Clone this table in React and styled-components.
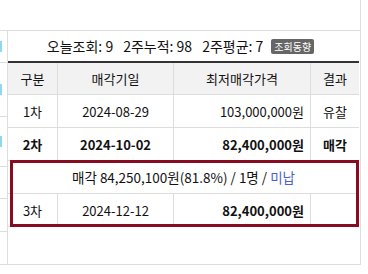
import React from "react";
import styled, {createGlobalStyle} from "styled-components";

const GlobalStyle = createGlobalStyle`
  body {
    margin: 0;
    background: #fff;
    font-family: "Noto Sans CJK KR", "Noto Sans", sans-serif;
    color: #111;
  }
`;

const Page = styled.div`
  width: 361px;
  display: flex;
  flex-direction: column;
`;

const TopBar = styled.div`
  height: 30px;
  border-bottom: 1px solid #ddd;
  border-right: 1px solid #ddd;
`;

const Body = styled.div`
  display: flex;
  height: 234px;
`;

const SideStrip = styled.div`
  width: 7px;
  display: flex;
  flex-direction: column;
  overflow: hidden;
`;

const SideCell = styled.div`
  height: ${props => props.h}px;
  border-bottom: 1px solid #ddd;
  display: flex;
  align-items: center;
`;

const LinkStub = styled.span`
  width: 2px;
  height: 11px;
  background: #8fd6f2;
`;

const Panel = styled.div`
  flex: 1;
  border-left: 1px solid #ddd;
  border-right: 1px solid #ddd;
  border-bottom: 1px solid #ddd;
  padding-right: 1px;
`;

const Stats = styled.div`
  height: 30px;
  display: flex;
  align-items: center;
  justify-content: center;
  font-size: 14px;
  padding-right: 6px;
`;

const Stat = styled.span`
  margin-left: ${props => props.first ? 0 : 10}px;
`;

const Badge = styled.span`
  margin-left: 8px;
  background: #666;
  color: #fff;
  font-size: 10px;
  line-height: 15px;
  height: 15px;
  padding: 0 3px;
  border-radius: 2px;
`;

const Table = styled.div`
  width: 351px;
  border-top: 2px solid #333;
  font-size: 13px;
`;

const Row = styled.div`
  display: grid;
  grid-template-columns: 50px 116px 137px 48px;
  height: ${props => props.h || 32}px;
  border-bottom: 1px solid #ddd;
  background: ${props => props.head ? '#f2f2f2' : '#fff'};
`;

const Cell = styled.div`
  display: flex;
  align-items: center;
  justify-content: ${props => props.right ? 'flex-end' : 'center'};
  padding: ${props => props.right ? '0 6px 0 0' : '0'};
  border-right: ${props => props.last ? 'none' : '1px solid #ddd'};
  font-weight: ${props => props.bold ? 700 : 400};
  white-space: nowrap;
`;

const WideRow = styled.div`
  height: 32px;
  border-bottom: 1px solid #ddd;
  display: flex;
  align-items: center;
  justify-content: center;
  white-space: nowrap;
  font-size: 13.5px;
`;

const Unpaid = styled.span`
  color: #4a63c9;
`;

const Highlight = styled.div`
  position: relative;

  &::after {
    content: "";
    position: absolute;
    left: 2px;
    right: 0;
    top: -1px;
    bottom: 0;
    border: 3px solid #870c22;
    pointer-events: none;
  }
`;

const rounds = [
    {no: '1차', date: '2024-08-29', price: '103,000,000원', result: '유찰', bold: false},
    {no: '2차', date: '2024-10-02', price: '82,400,000원', result: '매각', bold: true},
];

const sideRows = [
    {h: 31, link: true},
    {h: 53, link: true},
    {h: 50, link: true},
    {h: 31},
    {h: 32},
    {h: 32},
];

function App() {
    return (
        <>
            <GlobalStyle/>
            <Page>
                <TopBar/>
                <Body>
                    <SideStrip>
                        {sideRows.map((r, i) => (
                            <SideCell key={i} h={r.h}>
                                {r.link && <LinkStub/>}
                            </SideCell>
                        ))}
                    </SideStrip>
                    <Panel>
                        <Stats>
                            <Stat first>오늘조회: 9</Stat>
                            <Stat>2주누적: 98</Stat>
                            <Stat>2주평균: 7</Stat>
                            <Badge>조회동향</Badge>
                        </Stats>
                        <Table>
                            <Row head h={31}>
                                <Cell>구분</Cell>
                                <Cell>매각기일</Cell>
                                <Cell>최저매각가격</Cell>
                                <Cell last>결과</Cell>
                            </Row>
                            {rounds.map(r => (
                                <Row key={r.no}>
                                    <Cell bold={r.bold}>{r.no}</Cell>
                                    <Cell bold={r.bold}>{r.date}</Cell>
                                    <Cell right bold={r.bold}>{r.price}</Cell>
                                    <Cell last bold={r.bold}>{r.result}</Cell>
                                </Row>
                            ))}
                            <Highlight>
                                <WideRow>
                                    매각 84,250,100원(81.8%) / 1명 / <Unpaid>&nbsp;미납</Unpaid>
                                </WideRow>
                                <Row>
                                    <Cell>3차</Cell>
                                    <Cell>2024-12-12</Cell>
                                    <Cell right bold>82,400,000원</Cell>
                                    <Cell last></Cell>
                                </Row>
                            </Highlight>
                        </Table>
                    </Panel>
                </Body>
            </Page>
        </>
    );
}

export default App;
